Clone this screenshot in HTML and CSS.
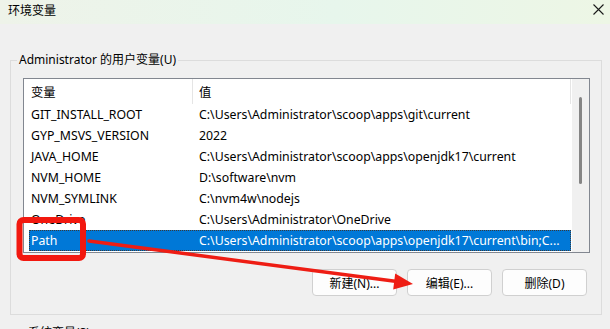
FILE: index.html
```html
<!DOCTYPE html>
<html lang="zh">
<head>
  <meta charset="UTF-8">
  <title>环境变量</title>
  <link rel="stylesheet" href="styles.css">
</head>
<body>
  <div class="window">
    <div class="titlebar">
      <span class="title">环境变量</span>
      <svg class="close" width="11" height="11" viewBox="0 0 11 11">
        <path d="M0.5 0.5 L10.5 10.5 M10.5 0.5 L0.5 10.5" stroke="#1a1a1a" stroke-width="1.1" fill="none"/>
      </svg>
    </div>

    <fieldset class="group">
      <legend>Administrator 的用户变量(U)</legend>
      <div class="listview">
        <div class="lv-body">
          <div class="lv-header">
            <div class="hcol name">变量</div>
            <div class="hcol value">值</div>
          </div>
          <div class="row"><span class="c1">GIT_INSTALL_ROOT</span><span class="c2">C:\Users\Administrator\scoop\apps\git\current</span></div>
          <div class="row"><span class="c1">GYP_MSVS_VERSION</span><span class="c2">2022</span></div>
          <div class="row"><span class="c1">JAVA_HOME</span><span class="c2">C:\Users\Administrator\scoop\apps\openjdk17\current</span></div>
          <div class="row"><span class="c1">NVM_HOME</span><span class="c2">D:\software\nvm</span></div>
          <div class="row"><span class="c1">NVM_SYMLINK</span><span class="c2">C:\nvm4w\nodejs</span></div>
          <div class="row"><span class="c1">OneDrive</span><span class="c2">C:\Users\Administrator\OneDrive</span></div>
          <div class="row selected"><span class="c1">Path</span><span class="c2">C:\Users\Administrator\scoop\apps\openjdk17\current\bin;C...</span></div>
        </div>
        <div class="scrollbar"><div class="thumb"></div></div>
      </div>
      <div class="buttons">
        <button>新建(N)...</button>
        <button>编辑(E)...</button>
        <button>删除(D)</button>
      </div>
    </fieldset>

    <fieldset class="group group-sys">
      <legend>系统变量(S)</legend>
    </fieldset>

    <!-- 标注：红框和箭头 -->
    <svg class="marks" width="610" height="329" viewBox="0 0 610 329">
      <rect x="19.5" y="220" width="63.5" height="38" rx="4" fill="none" stroke="#f2180f" stroke-width="6"/>
      <line x1="89" y1="241" x2="397" y2="281.5" stroke="#ee1d14" stroke-width="3.5" stroke-linecap="round"/>
      <polygon points="413,284 395.2,273.4 393.2,289.6" fill="#ee1d14"/>
    </svg>
  </div>
</body>
</html>
```

FILE: styles.css
```css
body {
  margin: 0;
  font-family: 'Noto Sans', 'Noto Sans CJK SC', sans-serif;
  font-size: 12px;
  color: #000;
}
.window {
  position: relative;
  width: 610px;
  height: 329px;
  overflow: hidden;
  background: #f0f0f0;
}
.titlebar {
  height: 24px;
  display: flex;
  align-items: center;
  justify-content: space-between;
  padding: 0 6px 0 8px;
  background: linear-gradient(90deg, #eef3e9, #e7f6ec 55%, #edf6e5);
}
.title {
  font-size: 12px;
  line-height: 1;
  margin-top: -3px;
}
.close {
  margin-top: -5px;
}
.group {
  margin: 28px 8px 0 10px;
  padding: 10px 11px 18px 12px;
  border: 1px solid #dcdcdc;
  min-width: 0;
}
.group legend {
  padding: 0 2px;
  margin-left: -6px;
  line-height: 16px;
  height: 16px;
}
.group-sys {
  margin-top: 10px;
  height: 40px;
}
.group-sys legend {
  margin-left: 3px;
}
.listview {
  display: flex;
  height: 173px;
  border: 1px solid #828790;
  background: #fff;
}
.lv-body {
  flex: 1;
  min-width: 0;
  font-size: 12.3px;
}
.lv-header {
  display: flex;
  height: 25px;
  align-items: stretch;
}
.hcol {
  display: flex;
  align-items: center;
}
.hcol.name {
  width: 161px;
  padding-left: 7px;
  border-right: 1px solid #e5e5e5;
}
.hcol.value {
  flex: 1;
  padding-left: 6px;
  border-right: 1px solid #e5e5e5;
  margin-right: 1px;
}
.row {
  display: flex;
  height: 21px;
  align-items: center;
  margin: 0 1px 0 5px;
  white-space: nowrap;
  overflow: hidden;
}
.c1 {
  width: 166px;
  padding-left: 2px;
  flex-shrink: 0;
}
.c2 {
  padding-left: 2px;
}
.row.selected {
  background: #0078d7;
  color: #fff;
  outline: 1px dotted #3a3a3a;
  outline-offset: -1px;
}
.scrollbar {
  width: 17px;
  background: #f0f0f0;
  display: flex;
  justify-content: center;
}
.thumb {
  width: 3px;
  height: 87px;
  margin-top: 18px;
  background: #858585;
  border-radius: 2px;
}
.buttons {
  display: flex;
  justify-content: flex-end;
  gap: 10px;
  margin-top: 16px;
  padding-right: 3px;
}
button {
  width: 85px;
  height: 27px;
  font-family: inherit;
  font-size: 12px;
  color: #000;
  background: #fdfdfd;
  border: 1px solid #d0d0d0;
  border-radius: 4px;
  padding: 0;
}
.marks {
  position: absolute;
  left: 0;
  top: 0;
  pointer-events: none;
}
```
